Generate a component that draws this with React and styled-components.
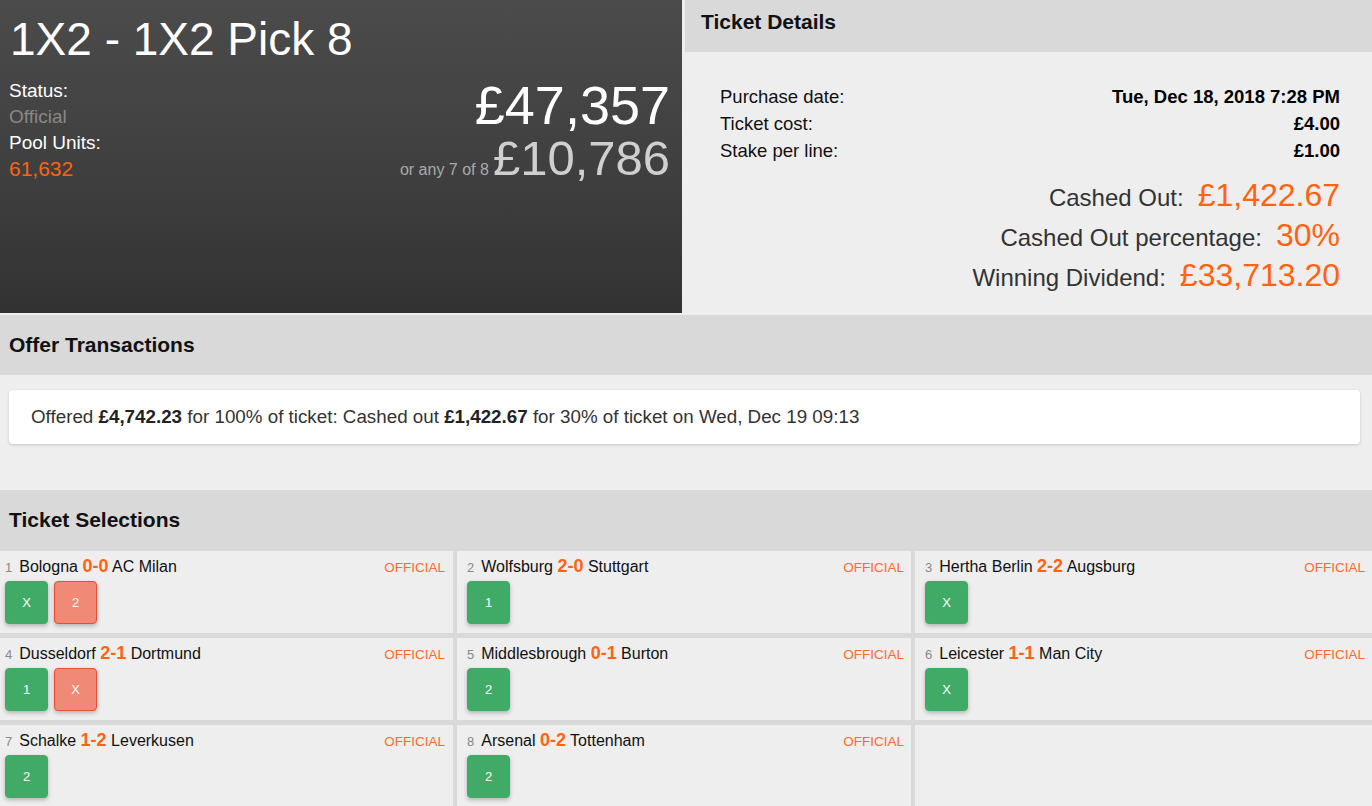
import React from "react";
import styled, { createGlobalStyle } from "styled-components";

const GlobalStyle = createGlobalStyle`
	html, body {
		margin: 0;
		padding: 0;
		background: #eeeeee;
		font-family: "Liberation Sans", Arial, sans-serif;
	}
	* { box-sizing: border-box; }
`;

const ORANGE = "#ff6310";

const selections = [
	{ n: 1, home: "Bologna", score: "0-0", away: "AC Milan", picks: [{ v: "X", win: true }, { v: "2" }] },
	{ n: 2, home: "Wolfsburg", score: "2-0", away: "Stuttgart", picks: [{ v: "1", win: true }] },
	{ n: 3, home: "Hertha Berlin", score: "2-2", away: "Augsburg", picks: [{ v: "X", win: true }] },
	{ n: 4, home: "Dusseldorf", score: "2-1", away: "Dortmund", picks: [{ v: "1", win: true }, { v: "X" }] },
	{ n: 5, home: "Middlesbrough", score: "0-1", away: "Burton", picks: [{ v: "2", win: true }] },
	{ n: 6, home: "Leicester", score: "1-1", away: "Man City", picks: [{ v: "X", win: true }] },
	{ n: 7, home: "Schalke", score: "1-2", away: "Leverkusen", picks: [{ v: "2", win: true }] },
	{ n: 8, home: "Arsenal", score: "0-2", away: "Tottenham", picks: [{ v: "2", win: true }] },
];

export default function App() {
	return (
		<Page>
			<GlobalStyle />
			<Top>
				<PoolPanel>
					<PoolTitle>1X2 - 1X2 Pick 8</PoolTitle>
					<PoolRow>
						<PoolInfo>
							<InfoLabel>Status:</InfoLabel>
							<InfoStatus>Official</InfoStatus>
							<InfoLabel>Pool Units:</InfoLabel>
							<InfoUnits>61,632</InfoUnits>
						</PoolInfo>
						<Amounts>
							<Jackpot>£47,357</Jackpot>
							<Consolation>
								<ConsolationNote>or any 7 of 8</ConsolationNote>
								<ConsolationValue>£10,786</ConsolationValue>
							</Consolation>
						</Amounts>
					</PoolRow>
				</PoolPanel>
				<DetailsPanel>
					<SectionHeader>Ticket Details</SectionHeader>
					<DetailsBody>
						<DetailRow>
							<DetailLabel>Purchase date:</DetailLabel>
							<DetailValue>Tue, Dec 18, 2018 7:28 PM</DetailValue>
						</DetailRow>
						<DetailRow>
							<DetailLabel>Ticket cost:</DetailLabel>
							<DetailValue>£4.00</DetailValue>
						</DetailRow>
						<DetailRow>
							<DetailLabel>Stake per line:</DetailLabel>
							<DetailValue>£1.00</DetailValue>
						</DetailRow>
						<Highlights>
							<HighlightRow>
								<HighlightLabel>Cashed Out:</HighlightLabel>
								<HighlightValue>£1,422.67</HighlightValue>
							</HighlightRow>
							<HighlightRow>
								<HighlightLabel>Cashed Out percentage:</HighlightLabel>
								<HighlightValue>30%</HighlightValue>
							</HighlightRow>
							<HighlightRow>
								<HighlightLabel>Winning Dividend:</HighlightLabel>
								<HighlightValue>£33,713.20</HighlightValue>
							</HighlightRow>
						</Highlights>
					</DetailsBody>
				</DetailsPanel>
			</Top>

			<Section>
				<SectionHeader $wide>Offer Transactions</SectionHeader>
				<OfferBody>
					<OfferCard>
						Offered <b>£4,742.23</b> for 100% of ticket: Cashed out <b>£1,422.67</b> for 30% of ticket on Wed, Dec 19 09:13
					</OfferCard>
				</OfferBody>
			</Section>

			<Section>
				<SectionHeader $wide>Ticket Selections</SectionHeader>
				<SelectionGrid>
					{selections.map((s) => (
						<SelectionCell key={s.n}>
							<MatchLine>
								<Match>
									<MatchNo>{s.n}</MatchNo>
									{s.home} <Score>{s.score}</Score> {s.away}
								</Match>
								<MatchStatus>OFFICIAL</MatchStatus>
							</MatchLine>
							<Picks>
								{s.picks.map((p) => (
									<Pick key={p.v} $win={p.win}>{p.v}</Pick>
								))}
							</Picks>
						</SelectionCell>
					))}
					<SelectionCell />
				</SelectionGrid>
			</Section>
		</Page>
	);
}

const Page = styled.div`
	width: 100%;
	min-height: 100vh;
	background: #eeeeee;
	color: #111;
`;

const Top = styled.div`
	display: grid;
	grid-template-columns: 682px 1fr;
	gap: 3px;
	height: 313px;
	background: #eeeeee;
`;

const PoolPanel = styled.div`
	display: flex;
	flex-direction: column;
	padding: 14px 12px 0 9px;
	background: linear-gradient(180deg, #4b4b4b 0%, #3f3f3f 55%, #323232 100%);
	color: #fff;
`;

const PoolTitle = styled.div`
	font-size: 46px;
	line-height: 50px;
	padding-left: 1px;
`;

const PoolRow = styled.div`
	display: flex;
	justify-content: space-between;
	margin-top: 14px;
`;

const PoolInfo = styled.div`
	display: flex;
	flex-direction: column;
`;

const InfoLabel = styled.div`
	font-size: 19px;
	line-height: 26px;
	color: #fff;
`;

const InfoStatus = styled(InfoLabel)`
	color: #888;
`;

const InfoUnits = styled(InfoLabel)`
	font-size: 21px;
	color: ${ORANGE};
`;

const Amounts = styled.div`
	display: flex;
	flex-direction: column;
	align-items: flex-end;
`;

const Jackpot = styled.div`
	font-size: 54px;
	line-height: 54px;
	color: #fff;
`;

const Consolation = styled.div`
	display: flex;
	align-items: baseline;
	gap: 4px;
	margin-top: 1px;
`;

const ConsolationNote = styled.span`
	font-size: 16px;
	color: #aaa;
`;

const ConsolationValue = styled.span`
	font-size: 49px;
	line-height: 50px;
	color: #cfcfcf;
`;

const DetailsPanel = styled.div`
	display: flex;
	flex-direction: column;
	background: #eeeeee;
`;

const SectionHeader = styled.div`
	display: flex;
	align-items: ${({ $wide }) => ($wide ? "center" : "flex-start")};
	height: ${({ $wide }) => ($wide ? "60px" : "52px")};
	padding-left: ${({ $wide }) => ($wide ? "9px" : "16px")};
	padding-top: ${({ $wide }) => ($wide ? "0" : "10px")};
	background: #d9d9d9;
	font-size: 21px;
	line-height: 24px;
	font-weight: bold;
	color: #111;
`;

const DetailsBody = styled.div`
	padding: 31px 32px 0 35px;
`;

const DetailRow = styled.div`
	display: flex;
	justify-content: space-between;
	align-items: baseline;
	line-height: 27px;
`;

const DetailLabel = styled.span`
	font-size: 18.5px;
	color: #111;
`;

const DetailValue = styled.span`
	font-size: 18.5px;
	font-weight: bold;
	color: #000;
`;

const Highlights = styled.div`
	display: flex;
	flex-direction: column;
	align-items: flex-end;
	margin-top: 11px;
`;

const HighlightRow = styled.div`
	display: flex;
	align-items: baseline;
	gap: 14px;
	height: 40px;
	line-height: 40px;
`;

const HighlightLabel = styled.span`
	font-size: 24px;
	color: #333;
`;

const HighlightValue = styled.span`
	font-size: 32px;
	color: ${ORANGE};
`;

const Section = styled.div`
	display: flex;
	flex-direction: column;
	padding-top: 2px;
	background: #eeeeee;
`;

const OfferBody = styled.div`
	padding: 14px 12px 44px 9px;
	background: #eeeeee;
	margin-top: 1px;
`;

const OfferCard = styled.div`
	height: 54px;
	line-height: 54px;
	padding-left: 22px;
	background: #fff;
	border-radius: 4px;
	box-shadow: 0 1px 3px rgba(0, 0, 0, 0.18);
	font-size: 18.8px;
	color: #333;

	b {
		color: #222;
	}
`;

const SelectionGrid = styled.div`
	display: grid;
	grid-template-columns: 453px 454px 1fr;
	grid-auto-rows: 82px;
	column-gap: 4px;
	row-gap: 5px;
	padding-top: 1px;
	background: #d9d9d9;
`;

const SelectionCell = styled.div`
	display: flex;
	flex-direction: column;
	padding: 5px 7px 0 10px;
	background: #eeeeee;

	&:nth-child(3n + 1) {
		padding-left: 5px;
		padding-right: 8px;
	}
`;

const MatchLine = styled.div`
	display: flex;
	justify-content: space-between;
	align-items: baseline;
	line-height: 20px;
`;

const Match = styled.div`
	font-size: 16px;
	color: #111;
`;

const MatchNo = styled.span`
	font-size: 13px;
	color: #888;
	margin-right: 7px;
`;

const Score = styled.span`
	font-size: 18px;
	font-weight: bold;
	color: ${ORANGE};
`;

const MatchStatus = styled.span`
	font-size: 13.5px;
	color: #ff6a2b;
`;

const Picks = styled.div`
	display: flex;
	gap: 6px;
	margin-top: 3px;
`;

const Pick = styled.div`
	display: flex;
	align-items: center;
	justify-content: center;
	width: 43px;
	height: 43px;
	border-radius: 4px;
	font-size: 13px;
	color: #fff;
	background: ${({ $win }) => ($win ? "#40ab66" : "#f08a76")};
	border: 1px solid ${({ $win }) => ($win ? "#40ab66" : "#ea4f35")};
	box-shadow: 0 2px 4px rgba(0, 0, 0, 0.25);
`;
